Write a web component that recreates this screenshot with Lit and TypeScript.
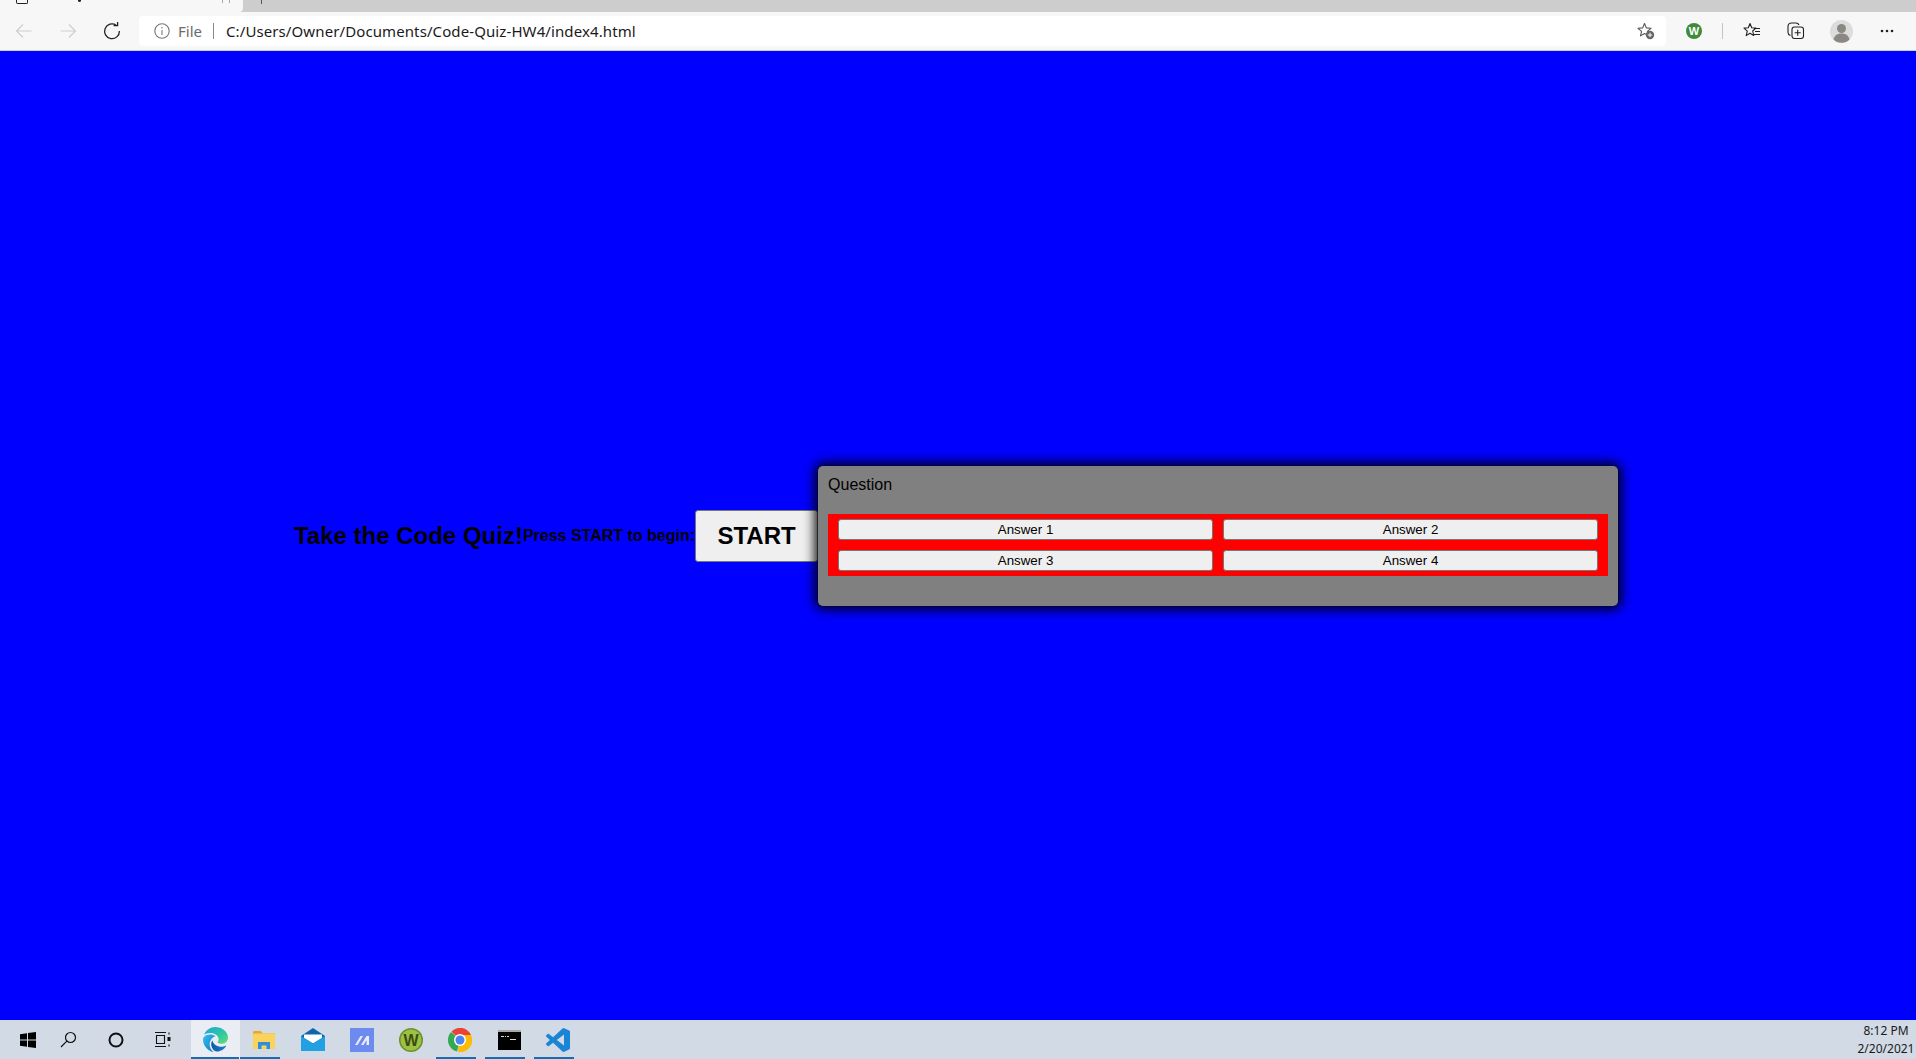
import { LitElement, html, css } from "lit";
import { customElement } from "lit/decorators.js";

@customElement("app-root")
export class AppRoot extends LitElement {
  static styles = css`
    :host { display: flex; flex-direction: column; height: 100vh; overflow: hidden; font-family: "Liberation Sans", Arial, sans-serif; }
    svg { display: block; }
    .tabstrip { height: 12px; background: #cdcdcd; display: flex; flex: none; }
    .tab { width: 243px; height: 12px; background: #f7f7f7; border-bottom-right-radius: 4px; display: flex; padding-left: 16px; box-sizing: border-box; }
    .tab-fav { width: 10px; height: 3px; border: 1.5px solid #222; border-top: none; border-radius: 0 0 2px 2px; }
    .tab-mark { width: 3px; height: 2px; background: #222; margin-left: 50px; border-radius: 0 0 2px 2px; }
    .tab-x { width: 8px; height: 3px; margin-left: 141px; border-left: 1px solid #aaa; border-right: 1px solid #aaa; box-sizing: border-box; }
    .tab2-mark { width: 1px; height: 4px; background: #555; margin-left: 18px; }
    .toolbar { height: 38px; background: #f7f7f7; border-bottom: 1px solid #cfcfcf; display: flex; align-items: center; flex: none; }
    .nav { width: 44px; height: 38px; display: flex; align-items: center; justify-content: center; flex: none; }
    .nav.first { margin-left: 2px; }
    .address { width: 1527px; height: 30px; margin-left: 5px; background: #fff; border-radius: 4px; display: flex; align-items: center; font: 15px "Noto Sans", sans-serif; flex: none; box-sizing: border-box; padding-left: 15px; position: relative; }
    .file { color: #6b6b6b; margin-left: 8px; }
    .sep { width: 1px; height: 16px; background: #8a8a8a; margin: 0 12px 0 11px; }
    .url { color: #1a1a1a; letter-spacing: 0.1px; }
    .addr-star { position: absolute; right: 11px; top: 6px; }
    .tool { display: flex; align-items: center; flex: none; }
    .w-ext { margin-left: 20px; }
    .tool-sep { width: 1px; height: 16px; background: #c4c4c4; margin: 0 20px; }
    .collections { margin-left: 26px; }
    .avatar { margin-left: 25px; }
    .more { margin-left: 27px; }
    .page { flex: 1; background: #0000ff; display: flex; align-items: center; justify-content: center; min-height: 0; padding-right: 4px; }
    .title { font-size: 24px; font-weight: 700; color: #000; white-space: nowrap; }
    .sub { font-size: 16px; font-weight: 700; color: #000; white-space: nowrap; }
    .start { width: 123px; height: 52px; font: 700 24px "Liberation Sans", Arial, sans-serif; background: #efefef; color: #000; border: 1px solid #767676; border-radius: 3px; padding: 0; flex: none; }
    .panel { position: relative; width: 800px; height: 140px; flex: none; box-sizing: border-box; background: #808080; border-radius: 5px; padding: 10px; box-shadow: 0 0 12px 3px #000; }
    .question { font-size: 16px; line-height: 18px; height: 38px; color: #000; }
    .answers { background: #ff0000; padding: 5px 10px; display: grid; grid-template-columns: 375px 375px; gap: 10px; }
    .answers button { height: 21px; padding: 0; font: 13.33px "Liberation Sans", Arial, sans-serif; background: #efefef; color: #000; border: 1px solid #767676; border-radius: 3px; }
    .taskbar { height: 39px; background: #d1dae5; display: flex; flex: none; }
    .tb { height: 39px; display: flex; align-items: center; justify-content: center; flex: none; box-sizing: border-box; }
    .tb.s0 { margin-left: 4px; width: 48px; }
    .tb.s1 { width: 32px; }
    .tb.s2 { width: 64px; }
    .tb.s3 { width: 30px; margin-right: 13px; }
    .app { width: 49px; padding-right: 1px; position: relative; }
    .app.on::after { content: ""; position: absolute; left: 0; right: 9px; bottom: 0; height: 2px; background: #0f70b7; }
    .app.active::after { right: 1px; }
    .app.active { background: #eaeef4; }
    .clock { margin-left: auto; width: 60px; box-sizing: border-box; font: 12px "Noto Sans", "Open Sans", sans-serif; color: #1a1a1a; display: flex; flex-direction: column; align-items: center; justify-content: center; line-height: 18px; flex: none; }
  `;

  render() {
    const answers = ["Answer 1", "Answer 2", "Answer 3", "Answer 4"];
    return html`
      <div class="tabstrip">
        <div class="tab"><span class="tab-fav"></span><span class="tab-mark"></span><span class="tab-x"></span></div>
        <span class="tab2-mark"></span>
      </div>
      <div class="toolbar">
        <div class="nav first"><svg width="18" height="16" viewBox="0 0 18 16" fill="none" stroke="#cfcfcf" stroke-width="1.2"><path d="M16.5 8H1.5M8 1.5L1.5 8l6.5 6.5"/></svg></div>
        <div class="nav"><svg width="18" height="16" viewBox="0 0 18 16" fill="none" stroke="#cfcfcf" stroke-width="1.2"><path d="M1.5 8h15M10 1.5L16.5 8 10 14.5"/></svg></div>
        <div class="nav"><svg width="18" height="18" viewBox="0 0 18 18" fill="none" stroke="#222" stroke-width="1.3"><path d="M13.2 3.2A7.4 7.4 0 1 0 16.4 9"/><path d="M10.6 3.6h4V0"/></svg></div>
        <div class="address">
          <svg width="16" height="16" viewBox="0 0 16 16" fill="none" stroke="#777" stroke-width="1.1"><circle cx="8" cy="8" r="7.2"/><path d="M8 7v5M8 4v1.4"/></svg>
          <span class="file">File</span><span class="sep"></span><span class="url">C:/Users/Owner/Documents/Code-Quiz-HW4/index4.html</span>
          <svg class="addr-star" width="18" height="18" viewBox="0 0 18 18"><path d="M7.5 1.5l1.8 4.4 4.7.4-3.6 3 1.1 4.6-4-2.4-4 2.4 1.1-4.6-3.6-3 4.7-.4z" fill="none" stroke="#555" stroke-width="1.1" stroke-linejoin="round"/><circle cx="13" cy="13" r="4.2" fill="#666"/><path d="M13 10.8v4.4M10.8 13h4.4" stroke="#fff" stroke-width="1"/></svg>
        </div>
        <div class="tool w-ext"><svg width="16" height="16" viewBox="0 0 16 16"><circle cx="8" cy="8" r="8" fill="#3f8a3c"/><text x="8" y="12" text-anchor="middle" font-family="Liberation Sans" font-weight="700" font-size="11" fill="#fff">W</text></svg></div>
        <span class="tool-sep"></span>
        <div class="tool"><svg width="18" height="18" viewBox="0 0 18 18" fill="none" stroke="#222" stroke-width="1.1" stroke-linejoin="round"><path d="M7 1.5l1.7 4.3 4.3.3-3.3 2.9 1 4.500L7 11.200l-3.800 2.400 1.100-4.500L1 6.100l4.300-.3z"/><path d="M11 6.500h6M12 9.500h5M11 12.500h6"/></svg></div>
        <div class="tool collections"><svg width="18" height="18" viewBox="0 0 18 18" fill="none" stroke="#222" stroke-width="1.1"><path d="M3.500 13.500C2 13 1 12 1 10.500V4.500C1 2.500 2.500 1 4.500 1H9c1.500 0 2.500.8 3 2"/><rect x="5" y="5" width="11.500" height="11.500" rx="2.500"/><path d="M10.700 7.800v6M7.700 10.800h6"/></svg></div>
        <div class="tool avatar"><svg width="23" height="23" viewBox="0 0 23 23"><circle cx="11.500" cy="11.500" r="11.500" fill="#dcdcdc"/><circle cx="11.500" cy="8.500" r="4.500" fill="#8b8782"/><path d="M3.500 19.500c1-4.500 4.500-6 8-6s7 1.500 8 6a11.500 11.500 0 0 1-16 0z" fill="#8b8782"/></svg></div>
        <div class="tool more"><svg width="14" height="4" viewBox="0 0 14 4" fill="#222"><circle cx="2" cy="2" r="1.300"/><circle cx="7" cy="2" r="1.300"/><circle cx="12" cy="2" r="1.300"/></svg></div>
      </div>
      <div class="page">
        <span class="title">Take the Code Quiz!</span>
        <span class="sub">Press START to begin:</span>
        <button class="start">START</button>
        <div class="panel">
          <div class="question">Question</div>
          <div class="answers">${answers.map((a) => html`<button>${a}</button>`)}</div>
        </div>
      </div>
      <div class="taskbar">
        <div class="tb s0"><svg width="16" height="16" viewBox="0 0 16 16" fill="#000"><path d="M0 2.300l7-1V7.500H0zM8 1.100L16 0v7.500H8zM0 8.500h7v6.200l-7-1zM8 8.500h8V16l-8-1.100z"/></svg></div>
        <div class="tb s1"><svg width="17" height="17" viewBox="0 0 17 17" fill="none" stroke="#111" stroke-width="1.200"><circle cx="10.500" cy="6.500" r="5"/><path d="M6.800 10.200L1 16"/></svg></div>
        <div class="tb s2"><svg width="16" height="16" viewBox="0 0 16 16" fill="none" stroke="#111" stroke-width="2"><circle cx="8" cy="8" r="6.500"/></svg></div>
        <div class="tb s3"><svg width="16" height="15" viewBox="0 0 16 15" fill="none" stroke="#111" stroke-width="1.100"><path d="M0 .5h11M0 14.500h11M1.500 3.500h8v8h-8z"/><path d="M14 .5v2M14 12.500v2"/><rect x="12.500" y="5" width="3" height="4" fill="#111" stroke="none"/></svg></div>
        <div class="tb app on active"><svg width="25" height="25" viewBox="0 0 24 24"><defs><linearGradient id="e1" x1="0" y1="0" x2="1" y2="1"><stop offset="0" stop-color="#35c1f1"/><stop offset="1" stop-color="#1272c4"/></linearGradient><linearGradient id="e2" x1="0" y1="0" x2="1" y2="1"><stop offset="0" stop-color="#1fa4d8"/><stop offset=".6" stop-color="#2fc9a0"/><stop offset="1" stop-color="#6fdc6c"/></linearGradient><linearGradient id="e3" x1="0" y1="0" x2="1" y2="0"><stop offset="0" stop-color="#0c59a4"/><stop offset="1" stop-color="#1b7fcc"/></linearGradient></defs>
          <path fill="url(#e3)" d="M21.860 17.860q.14 0 .25.12.1.13.1.25t-.11.33l-.32.46-.43.53-.44.5q-.21.25-.38.42l-.22.23q-.58.53-1.340 1.040-.76.51-1.600.91-.86.4-1.740.64t-1.670.24q-.9 0-1.690-.28-.8-.28-1.480-.78-.68-.5-1.220-1.170-.53-.66-.92-1.440-.38-.77-.58-1.600-.2-.83-.2-1.670 0-1 .32-1.960.33-.97.87-1.800.14.95.55 1.770.41.82 1.020 1.500.6.68 1.380 1.210.78.54 1.640.9.86.36 1.770.56.92.2 1.800.2 1.120 0 2.180-.24 1.060-.23 2.060-.72l.2-.1.2-.05z"/>
          <path fill="url(#e1)" d="M6.360 16.590q0 1.100.27 2.150.27 1.060.78 2.030.51.96 1.240 1.770.74.82 1.660 1.400-1.470-.2-2.800-.74-1.330-.55-2.480-1.370-1.150-.83-2.080-1.900-.92-1.070-1.580-2.330T.36 14.940Q0 13.540 0 12.060q0-.81.32-1.490.31-.68.83-1.230.53-.55 1.200-.96.66-.4 1.350-.66.74-.27 1.500-.39.78-.12 1.550-.12.7 0 1.420.1.72.12 1.400.35.68.23 1.320.57.63.35 1.160.83-.35 0-.7.07-.33.07-.65.23v-.02q-.63.28-1.200.74-.57.46-1.050 1.040-.48.58-.87 1.260-.38.67-.65 1.390-.27.71-.42 1.440-.15.72-.15 1.380z"/>
          <path fill="url(#e2)" d="M11.960.06q1.700 0 3.330.39 1.630.38 3.070 1.150 1.430.77 2.620 1.930 1.180 1.160 1.980 2.700.49.94.76 1.960.28 1 .28 2.080 0 .89-.23 1.700-.24.8-.69 1.480-.45.68-1.100 1.220-.64.53-1.450.88-.54.24-1.110.36-.58.13-1.160.13-.42 0-.97-.03-.54-.03-1.100-.12-.55-.1-1.050-.28-.5-.19-.84-.5-.12-.09-.23-.24-.1-.16-.1-.33 0-.15.16-.35.16-.2.35-.5.2-.28.36-.68.16-.4.16-.95 0-1.060-.4-1.960-.4-.91-1.060-1.640-.66-.74-1.520-1.280-.86-.55-1.790-.89-.84-.3-1.720-.44-.87-.14-1.760-.14-1.550 0-3.060.45T.94 7.550q.71-1.740 1.810-3.130 1.100-1.380 2.520-2.350Q6.680 1.100 8.370.58q1.700-.52 3.580-.52z"/></svg></div>
        <div class="tb app on"><svg width="22" height="18" viewBox="0 0 22 18"><path d="M0 1.500C0 .7.500 0 1.500 0h6L10 2.500h12V6H0z" fill="#e4a82f"/><rect y="2.500" width="22" height="15.500" rx="1" fill="#fbd35c"/><path d="M5 18v-7h12v7h-3.500v-3.500h-5V18z" fill="#2f8fd8"/></svg></div>
        <div class="tb app"><svg width="24" height="23" viewBox="0 0 24 23"><path d="M12 0L24 8v15H0V8z" fill="#0e66ac"/><path d="M3 6.500h18V10l-9 5.500L3 10z" fill="#fff"/><path d="M0 8l12 7.500L24 8v15H0z" fill="#22a0e4"/></svg></div>
        <div class="tb app"><svg width="24" height="24" viewBox="0 0 24 24"><rect width="24" height="24" fill="#6d8bee"/><path d="M5 17l5.500-9h2.500l-5.500 9zM11 17l5.500-9H19v9h-2.500v-5l-3 5z" fill="#e8ecfc"/></svg></div>
        <div class="tb app"><svg width="24" height="24" viewBox="0 0 24 24"><circle cx="12" cy="12" r="12" fill="#6f8f2a"/><circle cx="12" cy="12" r="10.500" fill="#9cc243"/><text x="12" y="17.500" text-anchor="middle" font-family="Liberation Sans" font-weight="700" font-size="16" fill="#3a4d14">W</text></svg></div>
        <div class="tb app on"><svg width="24" height="24" viewBox="0 0 24 24"><path d="M12 12L3.500 3.500A12 12 0 0 1 23 7H12z" fill="#ea4335"/><path d="M12 12L3 4A12 12 0 0 0 9 23.600z" fill="#34a853"/><path d="M12 7h11a12 12 0 0 1-13 17z" fill="#fbbc05"/><circle cx="12" cy="12" r="6" fill="#fff"/><circle cx="12" cy="12" r="4.500" fill="#4a85f0"/></svg></div>
        <div class="tb app on"><svg width="23" height="20" viewBox="0 0 23 20"><rect width="23" height="20" fill="#000"/><rect width="23" height="2" fill="#a8a8a8"/><path d="M3 6h3v1H3zM7 6h1v1H7zM9 6h2v1H9zM12 9h6v1h-6z" fill="#ddd"/></svg></div>
        <div class="tb app on"><svg width="24" height="24" viewBox="0 0 24 24"><path fill="#1a85d4" d="M23.150 2.587L18.210.21a1.494 1.494 0 0 0-1.705.29l-9.460 8.630-4.120-3.128a.999.999 0 0 0-1.276.057L.327 7.261A1 1 0 0 0 .326 8.740L3.899 12 .326 15.260a1 1 0 0 0 .001 1.479L1.650 17.940a.999.999 0 0 0 1.276.057l4.120-3.128 9.460 8.630a1.492 1.492 0 0 0 1.704.29l4.942-2.377A1.500 1.500 0 0 0 24 20.060V3.939a1.500 1.500 0 0 0-.85-1.352zm-5.146 14.861L10.826 12l7.178-5.448v10.896z"/></svg></div>
        <div class="clock"><span>8:12 PM</span><span>2/20/2021</span></div>
      </div>
    `;
  }
}
